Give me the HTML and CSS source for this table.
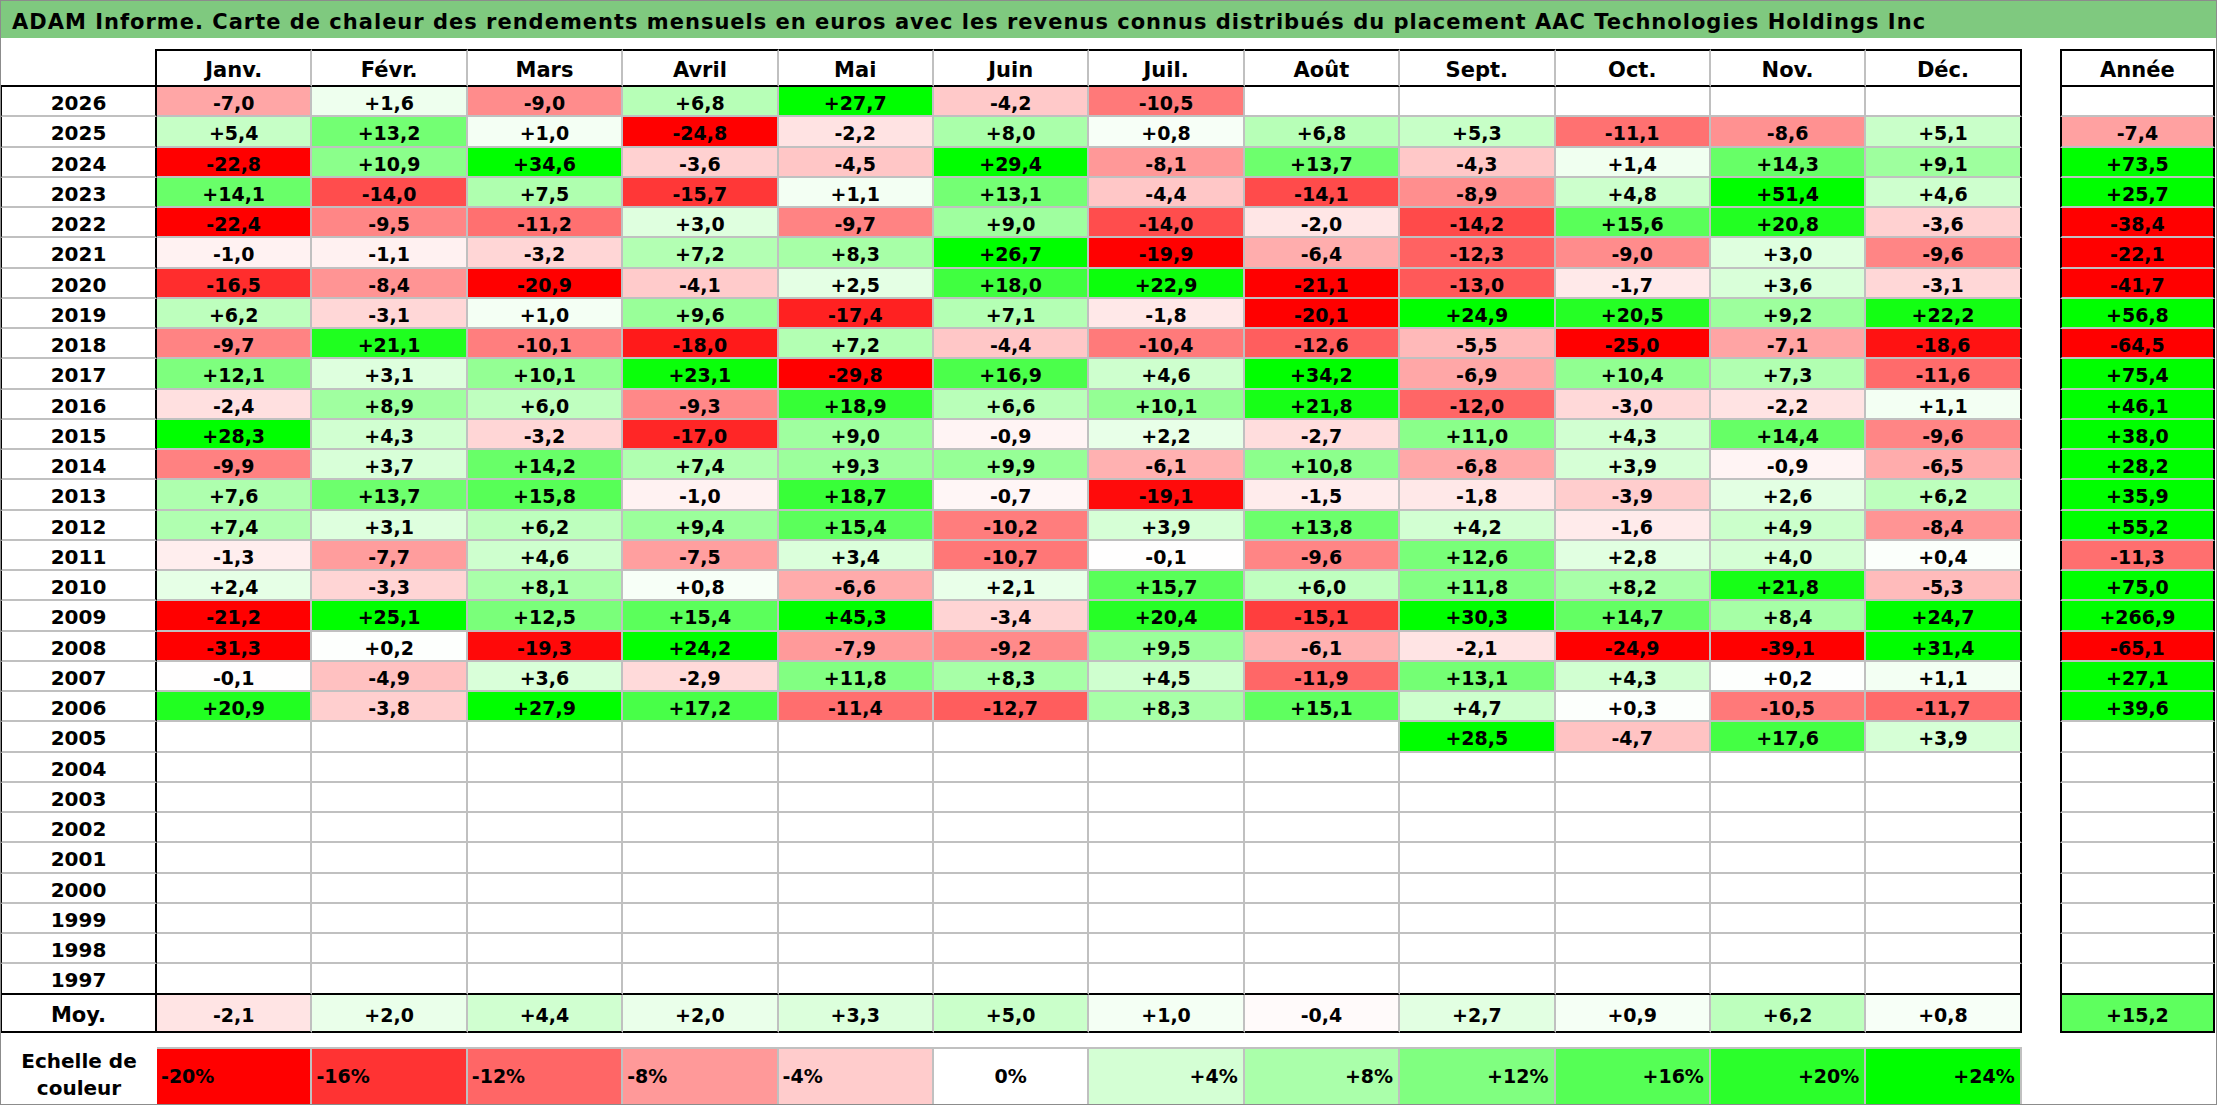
FILE: index.html
```html
<!DOCTYPE html>
<html lang="fr">
<head>
<meta charset="utf-8">
<title>ADAM Informe</title>
<link rel="stylesheet" href="styles.css">
</head>
<body>
<div class="page">
  <div class="title">ADAM Informe. Carte de chaleur des rendements mensuels en euros avec les revenus connus distribués du placement AAC Technologies Holdings Inc</div>
  <table class="heat">
    <colgroup>
      <col class="c-label">
      <col class="c-month"><col class="c-month"><col class="c-month"><col class="c-month"><col class="c-month"><col class="c-month">
      <col class="c-month"><col class="c-month"><col class="c-month"><col class="c-month"><col class="c-month"><col class="c-month">
      <col class="c-gap">
      <col class="c-year">
    </colgroup>
    <thead>
      <tr class="head"><th class="corner"></th><th class="mo">Janv.</th><th class="mo">Févr.</th><th class="mo">Mars</th><th class="mo">Avril</th><th class="mo">Mai</th><th class="mo">Juin</th><th class="mo">Juil.</th><th class="mo">Août</th><th class="mo">Sept.</th><th class="mo">Oct.</th><th class="mo">Nov.</th><th class="mo dec">Déc.</th><td class="gap"></td><th class="yrh">Année</th></tr>
    </thead>
    <tbody>
      <tr class="d"><th class="lab">2026</th><td class="m">-7,0</td><td class="m">+1,6</td><td class="m">-9,0</td><td class="m">+6,8</td><td class="m">+27,7</td><td class="m">-4,2</td><td class="m">-10,5</td><td class="m"></td><td class="m"></td><td class="m"></td><td class="m"></td><td class="m dec"></td><td class="gap"></td><td class="yr"></td></tr>
      <tr class="d"><th class="lab">2025</th><td class="m">+5,4</td><td class="m">+13,2</td><td class="m">+1,0</td><td class="m">-24,8</td><td class="m">-2,2</td><td class="m">+8,0</td><td class="m">+0,8</td><td class="m">+6,8</td><td class="m">+5,3</td><td class="m">-11,1</td><td class="m">-8,6</td><td class="m dec">+5,1</td><td class="gap"></td><td class="yr">-7,4</td></tr>
      <tr class="d"><th class="lab">2024</th><td class="m">-22,8</td><td class="m">+10,9</td><td class="m">+34,6</td><td class="m">-3,6</td><td class="m">-4,5</td><td class="m">+29,4</td><td class="m">-8,1</td><td class="m">+13,7</td><td class="m">-4,3</td><td class="m">+1,4</td><td class="m">+14,3</td><td class="m dec">+9,1</td><td class="gap"></td><td class="yr">+73,5</td></tr>
      <tr class="d"><th class="lab">2023</th><td class="m">+14,1</td><td class="m">-14,0</td><td class="m">+7,5</td><td class="m">-15,7</td><td class="m">+1,1</td><td class="m">+13,1</td><td class="m">-4,4</td><td class="m">-14,1</td><td class="m">-8,9</td><td class="m">+4,8</td><td class="m">+51,4</td><td class="m dec">+4,6</td><td class="gap"></td><td class="yr">+25,7</td></tr>
      <tr class="d"><th class="lab">2022</th><td class="m">-22,4</td><td class="m">-9,5</td><td class="m">-11,2</td><td class="m">+3,0</td><td class="m">-9,7</td><td class="m">+9,0</td><td class="m">-14,0</td><td class="m">-2,0</td><td class="m">-14,2</td><td class="m">+15,6</td><td class="m">+20,8</td><td class="m dec">-3,6</td><td class="gap"></td><td class="yr">-38,4</td></tr>
      <tr class="d"><th class="lab">2021</th><td class="m">-1,0</td><td class="m">-1,1</td><td class="m">-3,2</td><td class="m">+7,2</td><td class="m">+8,3</td><td class="m">+26,7</td><td class="m">-19,9</td><td class="m">-6,4</td><td class="m">-12,3</td><td class="m">-9,0</td><td class="m">+3,0</td><td class="m dec">-9,6</td><td class="gap"></td><td class="yr">-22,1</td></tr>
      <tr class="d"><th class="lab">2020</th><td class="m">-16,5</td><td class="m">-8,4</td><td class="m">-20,9</td><td class="m">-4,1</td><td class="m">+2,5</td><td class="m">+18,0</td><td class="m">+22,9</td><td class="m">-21,1</td><td class="m">-13,0</td><td class="m">-1,7</td><td class="m">+3,6</td><td class="m dec">-3,1</td><td class="gap"></td><td class="yr">-41,7</td></tr>
      <tr class="d"><th class="lab">2019</th><td class="m">+6,2</td><td class="m">-3,1</td><td class="m">+1,0</td><td class="m">+9,6</td><td class="m">-17,4</td><td class="m">+7,1</td><td class="m">-1,8</td><td class="m">-20,1</td><td class="m">+24,9</td><td class="m">+20,5</td><td class="m">+9,2</td><td class="m dec">+22,2</td><td class="gap"></td><td class="yr">+56,8</td></tr>
      <tr class="d"><th class="lab">2018</th><td class="m">-9,7</td><td class="m">+21,1</td><td class="m">-10,1</td><td class="m">-18,0</td><td class="m">+7,2</td><td class="m">-4,4</td><td class="m">-10,4</td><td class="m">-12,6</td><td class="m">-5,5</td><td class="m">-25,0</td><td class="m">-7,1</td><td class="m dec">-18,6</td><td class="gap"></td><td class="yr">-64,5</td></tr>
      <tr class="d"><th class="lab">2017</th><td class="m">+12,1</td><td class="m">+3,1</td><td class="m">+10,1</td><td class="m">+23,1</td><td class="m">-29,8</td><td class="m">+16,9</td><td class="m">+4,6</td><td class="m">+34,2</td><td class="m">-6,9</td><td class="m">+10,4</td><td class="m">+7,3</td><td class="m dec">-11,6</td><td class="gap"></td><td class="yr">+75,4</td></tr>
      <tr class="d"><th class="lab">2016</th><td class="m">-2,4</td><td class="m">+8,9</td><td class="m">+6,0</td><td class="m">-9,3</td><td class="m">+18,9</td><td class="m">+6,6</td><td class="m">+10,1</td><td class="m">+21,8</td><td class="m">-12,0</td><td class="m">-3,0</td><td class="m">-2,2</td><td class="m dec">+1,1</td><td class="gap"></td><td class="yr">+46,1</td></tr>
      <tr class="d"><th class="lab">2015</th><td class="m">+28,3</td><td class="m">+4,3</td><td class="m">-3,2</td><td class="m">-17,0</td><td class="m">+9,0</td><td class="m">-0,9</td><td class="m">+2,2</td><td class="m">-2,7</td><td class="m">+11,0</td><td class="m">+4,3</td><td class="m">+14,4</td><td class="m dec">-9,6</td><td class="gap"></td><td class="yr">+38,0</td></tr>
      <tr class="d"><th class="lab">2014</th><td class="m">-9,9</td><td class="m">+3,7</td><td class="m">+14,2</td><td class="m">+7,4</td><td class="m">+9,3</td><td class="m">+9,9</td><td class="m">-6,1</td><td class="m">+10,8</td><td class="m">-6,8</td><td class="m">+3,9</td><td class="m">-0,9</td><td class="m dec">-6,5</td><td class="gap"></td><td class="yr">+28,2</td></tr>
      <tr class="d"><th class="lab">2013</th><td class="m">+7,6</td><td class="m">+13,7</td><td class="m">+15,8</td><td class="m">-1,0</td><td class="m">+18,7</td><td class="m">-0,7</td><td class="m">-19,1</td><td class="m">-1,5</td><td class="m">-1,8</td><td class="m">-3,9</td><td class="m">+2,6</td><td class="m dec">+6,2</td><td class="gap"></td><td class="yr">+35,9</td></tr>
      <tr class="d"><th class="lab">2012</th><td class="m">+7,4</td><td class="m">+3,1</td><td class="m">+6,2</td><td class="m">+9,4</td><td class="m">+15,4</td><td class="m">-10,2</td><td class="m">+3,9</td><td class="m">+13,8</td><td class="m">+4,2</td><td class="m">-1,6</td><td class="m">+4,9</td><td class="m dec">-8,4</td><td class="gap"></td><td class="yr">+55,2</td></tr>
      <tr class="d"><th class="lab">2011</th><td class="m">-1,3</td><td class="m">-7,7</td><td class="m">+4,6</td><td class="m">-7,5</td><td class="m">+3,4</td><td class="m">-10,7</td><td class="m">-0,1</td><td class="m">-9,6</td><td class="m">+12,6</td><td class="m">+2,8</td><td class="m">+4,0</td><td class="m dec">+0,4</td><td class="gap"></td><td class="yr">-11,3</td></tr>
      <tr class="d"><th class="lab">2010</th><td class="m">+2,4</td><td class="m">-3,3</td><td class="m">+8,1</td><td class="m">+0,8</td><td class="m">-6,6</td><td class="m">+2,1</td><td class="m">+15,7</td><td class="m">+6,0</td><td class="m">+11,8</td><td class="m">+8,2</td><td class="m">+21,8</td><td class="m dec">-5,3</td><td class="gap"></td><td class="yr">+75,0</td></tr>
      <tr class="d"><th class="lab">2009</th><td class="m">-21,2</td><td class="m">+25,1</td><td class="m">+12,5</td><td class="m">+15,4</td><td class="m">+45,3</td><td class="m">-3,4</td><td class="m">+20,4</td><td class="m">-15,1</td><td class="m">+30,3</td><td class="m">+14,7</td><td class="m">+8,4</td><td class="m dec">+24,7</td><td class="gap"></td><td class="yr">+266,9</td></tr>
      <tr class="d"><th class="lab">2008</th><td class="m">-31,3</td><td class="m">+0,2</td><td class="m">-19,3</td><td class="m">+24,2</td><td class="m">-7,9</td><td class="m">-9,2</td><td class="m">+9,5</td><td class="m">-6,1</td><td class="m">-2,1</td><td class="m">-24,9</td><td class="m">-39,1</td><td class="m dec">+31,4</td><td class="gap"></td><td class="yr">-65,1</td></tr>
      <tr class="d"><th class="lab">2007</th><td class="m">-0,1</td><td class="m">-4,9</td><td class="m">+3,6</td><td class="m">-2,9</td><td class="m">+11,8</td><td class="m">+8,3</td><td class="m">+4,5</td><td class="m">-11,9</td><td class="m">+13,1</td><td class="m">+4,3</td><td class="m">+0,2</td><td class="m dec">+1,1</td><td class="gap"></td><td class="yr">+27,1</td></tr>
      <tr class="d"><th class="lab">2006</th><td class="m">+20,9</td><td class="m">-3,8</td><td class="m">+27,9</td><td class="m">+17,2</td><td class="m">-11,4</td><td class="m">-12,7</td><td class="m">+8,3</td><td class="m">+15,1</td><td class="m">+4,7</td><td class="m">+0,3</td><td class="m">-10,5</td><td class="m dec">-11,7</td><td class="gap"></td><td class="yr">+39,6</td></tr>
      <tr class="d"><th class="lab">2005</th><td class="m"></td><td class="m"></td><td class="m"></td><td class="m"></td><td class="m"></td><td class="m"></td><td class="m"></td><td class="m"></td><td class="m">+28,5</td><td class="m">-4,7</td><td class="m">+17,6</td><td class="m dec">+3,9</td><td class="gap"></td><td class="yr"></td></tr>
      <tr class="d"><th class="lab">2004</th><td class="m"></td><td class="m"></td><td class="m"></td><td class="m"></td><td class="m"></td><td class="m"></td><td class="m"></td><td class="m"></td><td class="m"></td><td class="m"></td><td class="m"></td><td class="m dec"></td><td class="gap"></td><td class="yr"></td></tr>
      <tr class="d"><th class="lab">2003</th><td class="m"></td><td class="m"></td><td class="m"></td><td class="m"></td><td class="m"></td><td class="m"></td><td class="m"></td><td class="m"></td><td class="m"></td><td class="m"></td><td class="m"></td><td class="m dec"></td><td class="gap"></td><td class="yr"></td></tr>
      <tr class="d"><th class="lab">2002</th><td class="m"></td><td class="m"></td><td class="m"></td><td class="m"></td><td class="m"></td><td class="m"></td><td class="m"></td><td class="m"></td><td class="m"></td><td class="m"></td><td class="m"></td><td class="m dec"></td><td class="gap"></td><td class="yr"></td></tr>
      <tr class="d"><th class="lab">2001</th><td class="m"></td><td class="m"></td><td class="m"></td><td class="m"></td><td class="m"></td><td class="m"></td><td class="m"></td><td class="m"></td><td class="m"></td><td class="m"></td><td class="m"></td><td class="m dec"></td><td class="gap"></td><td class="yr"></td></tr>
      <tr class="d"><th class="lab">2000</th><td class="m"></td><td class="m"></td><td class="m"></td><td class="m"></td><td class="m"></td><td class="m"></td><td class="m"></td><td class="m"></td><td class="m"></td><td class="m"></td><td class="m"></td><td class="m dec"></td><td class="gap"></td><td class="yr"></td></tr>
      <tr class="d"><th class="lab">1999</th><td class="m"></td><td class="m"></td><td class="m"></td><td class="m"></td><td class="m"></td><td class="m"></td><td class="m"></td><td class="m"></td><td class="m"></td><td class="m"></td><td class="m"></td><td class="m dec"></td><td class="gap"></td><td class="yr"></td></tr>
      <tr class="d"><th class="lab">1998</th><td class="m"></td><td class="m"></td><td class="m"></td><td class="m"></td><td class="m"></td><td class="m"></td><td class="m"></td><td class="m"></td><td class="m"></td><td class="m"></td><td class="m"></td><td class="m dec"></td><td class="gap"></td><td class="yr"></td></tr>
      <tr class="d end"><th class="lab">1997</th><td class="m"></td><td class="m"></td><td class="m"></td><td class="m"></td><td class="m"></td><td class="m"></td><td class="m"></td><td class="m"></td><td class="m"></td><td class="m"></td><td class="m"></td><td class="m dec"></td><td class="gap"></td><td class="yr"></td></tr>
      <tr class="avg end"><th class="lab">Moy.</th><td class="m">-2,1</td><td class="m">+2,0</td><td class="m">+4,4</td><td class="m">+2,0</td><td class="m">+3,3</td><td class="m">+5,0</td><td class="m">+1,0</td><td class="m">-0,4</td><td class="m">+2,7</td><td class="m">+0,9</td><td class="m">+6,2</td><td class="m dec">+0,8</td><td class="gap"></td><td class="yr">+15,2</td></tr>
      <tr class="spacer"><td colspan="15"></td></tr>
      <tr class="scale"><th class="cap">Echelle de<br>couleur</th><td class="sc neg n20">-20%</td><td class="sc neg n16">-16%</td><td class="sc neg n12">-12%</td><td class="sc neg n8">-8%</td><td class="sc neg n4">-4%</td><td class="sc zero">0%</td><td class="sc pos p4">+4%</td><td class="sc pos p8">+8%</td><td class="sc pos p12">+12%</td><td class="sc pos p16">+16%</td><td class="sc pos p20">+20%</td><td class="sc pos p24">+24%</td><td class="gap"></td><td class="blank"></td></tr>
    </tbody>
  </table>
</div>
<script src="app.js"></script>
</body>
</html>
```

FILE: styles.css
```css
html, body {
  margin: 0;
  padding: 0;
  background: #ffffff;
}

.page {
  box-sizing: border-box;
  width: 2217px;
  height: 1105px;
  border: 1px solid #8c8c8c;
  background: #ffffff;
  overflow: hidden;
  font-family: "DejaVu Sans", "Liberation Sans", sans-serif;
  font-weight: bold;
  color: #000000;
}

.title {
  height: 32px;
  padding: 5px 0 0 11px;
  line-height: 32px;
  background: #7fc97f;
  font-size: 21px;
  letter-spacing: 1px;
  white-space: nowrap;
  overflow: hidden;
}

.heat {
  margin-top: 11px;
  border-collapse: separate;
  border-spacing: 0;
  table-layout: fixed;
  width: 2214px;
}

.heat col.c-label { width: 156px; }
.heat col.c-month { width: 155.4px; }
.heat col.c-gap { width: 38.2px; }
.heat col.c-year { width: 155px; }

.heat th,
.heat td {
  box-sizing: border-box;
  padding: 4px 0 0;
  text-align: center;
  vertical-align: middle;
  font-size: 19px;
  font-weight: bold;
  white-space: nowrap;
  border: none;
}

.heat tr.head { height: 38px; }
.heat tr.d { height: 30.25px; }
.heat tr.avg { height: 38px; }
.heat tr.spacer { height: 14px; }
.heat tr.scale { height: 57px; }

.heat tr.spacer td { padding: 0; }

/* header */
.heat th.corner {
  border-bottom: 2px solid #000000;
  border-right: 2px solid #000000;
}

.heat th.mo {
  font-size: 21px;
  border-top: 2px solid #000000;
  border-bottom: 2px solid #000000;
  border-right: 2px solid #c0c0c0;
}

.heat th.yrh {
  font-size: 21px;
  border: 2px solid #000000;
}

/* body cells */
.heat th.lab {
  font-size: 20px;
  border-left: 1px solid #000000;
  border-right: 2px solid #000000;
  border-bottom: 2px solid #c0c0c0;
}

.heat tr.avg th.lab { font-size: 21px; }

.heat td.m {
  border-right: 2px solid #c0c0c0;
  border-bottom: 2px solid #c0c0c0;
}

.heat td.dec,
.heat th.dec {
  border-right: 2px solid #000000;
}

.heat td.yr {
  border-left: 2px solid #000000;
  border-right: 2px solid #000000;
  border-bottom: 2px solid #c0c0c0;
}

.heat tr.end th,
.heat tr.end td {
  border-bottom-color: #000000;
}

/* colour scale */
.heat th.cap {
  font-size: 20px;
  line-height: 27px;
  padding: 0;
}

.heat td.sc {
  border-top: 2px solid #c0c0c0;
  border-right: 2px solid #c0c0c0;
  font-size: 19px;
  padding-top: 0;
}

.heat td.neg { text-align: left; padding-left: 4px; }
.heat td.pos { text-align: right; padding-right: 5px; }
.heat td.zero { text-align: center; }

.n20 { background: #ff0000; }
.n16 { background: #ff3333; }
.n12 { background: #ff6666; }
.n8 { background: #ff9999; }
.n4 { background: #ffcccc; }
.zero { background: #ffffff; }
.p4 { background: #d4ffd4; }
.p8 { background: #aaffaa; }
.p12 { background: #80ff80; }
.p16 { background: #55ff55; }
.p20 { background: #2bff2b; }
.p24 { background: #00ff00; }
```

FILE: app.js
```js
(function () {
  var cells = document.querySelectorAll('.heat td.m, .heat td.yr');
  cells.forEach(function (td) {
    var t = td.textContent.trim();
    if (!t) return;
    var v = parseFloat(t.replace(',', '.'));
    if (isNaN(v)) return;
    var c;
    if (v >= 0) {
      c = Math.round(255 - Math.min(v, 24) / 24 * 255);
      td.style.backgroundColor = 'rgb(' + c + ',255,' + c + ')';
    } else {
      c = Math.round(255 - Math.min(-v, 20) / 20 * 255);
      td.style.backgroundColor = 'rgb(255,' + c + ',' + c + ')';
    }
  });
})();
```
